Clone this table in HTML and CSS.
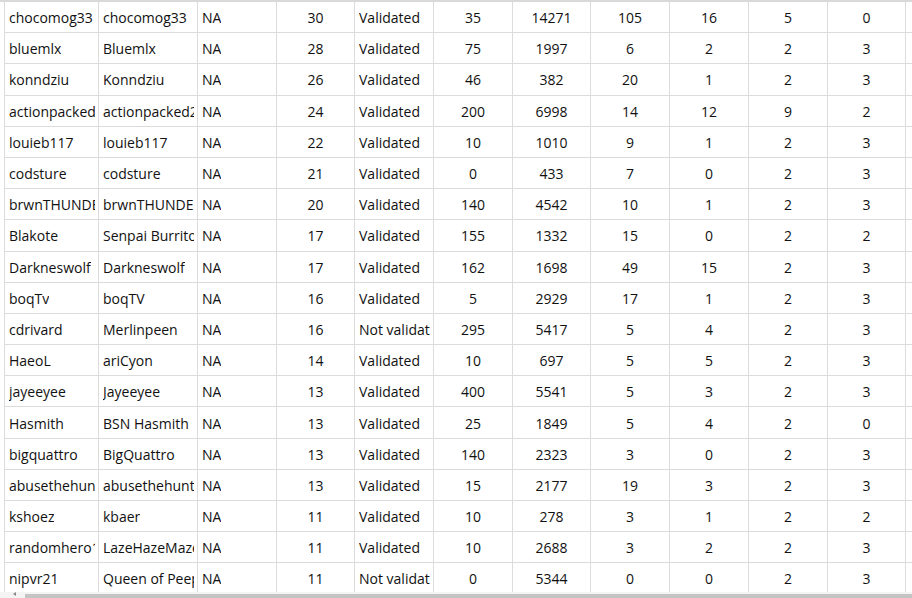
FILE: index.html
```html
<!DOCTYPE html>
<html>
<head>
<meta charset="utf-8">
<link rel="stylesheet" href="styles.css">
</head>
<body>
<div class="view">
  <div class="grid">
    <div class="c l"><span>chocomog33</span></div><div class="c l"><span>chocomog33</span></div><div class="c l"><span>NA</span></div><div class="c m">30</div><div class="c l"><span>Validated</span></div><div class="c m">35</div><div class="c m">14271</div><div class="c m">105</div><div class="c m">16</div><div class="c m">5</div><div class="c m">0</div><div class="c e"></div>
    <div class="c l"><span>bluemlx</span></div><div class="c l"><span>Bluemlx</span></div><div class="c l"><span>NA</span></div><div class="c m">28</div><div class="c l"><span>Validated</span></div><div class="c m">75</div><div class="c m">1997</div><div class="c m">6</div><div class="c m">2</div><div class="c m">2</div><div class="c m">3</div><div class="c e"></div>
    <div class="c l"><span>konndziu</span></div><div class="c l"><span>Konndziu</span></div><div class="c l"><span>NA</span></div><div class="c m">26</div><div class="c l"><span>Validated</span></div><div class="c m">46</div><div class="c m">382</div><div class="c m">20</div><div class="c m">1</div><div class="c m">2</div><div class="c m">3</div><div class="c e"></div>
    <div class="c l"><span>actionpacked</span></div><div class="c l"><span>actionpacked2k</span></div><div class="c l"><span>NA</span></div><div class="c m">24</div><div class="c l"><span>Validated</span></div><div class="c m">200</div><div class="c m">6998</div><div class="c m">14</div><div class="c m">12</div><div class="c m">9</div><div class="c m">2</div><div class="c e"></div>
    <div class="c l"><span>louieb117</span></div><div class="c l"><span>louieb117</span></div><div class="c l"><span>NA</span></div><div class="c m">22</div><div class="c l"><span>Validated</span></div><div class="c m">10</div><div class="c m">1010</div><div class="c m">9</div><div class="c m">1</div><div class="c m">2</div><div class="c m">3</div><div class="c e"></div>
    <div class="c l"><span>codsture</span></div><div class="c l"><span>codsture</span></div><div class="c l"><span>NA</span></div><div class="c m">21</div><div class="c l"><span>Validated</span></div><div class="c m">0</div><div class="c m">433</div><div class="c m">7</div><div class="c m">0</div><div class="c m">2</div><div class="c m">3</div><div class="c e"></div>
    <div class="c l"><span>brwnTHUNDER</span></div><div class="c l"><span>brwnTHUNDER</span></div><div class="c l"><span>NA</span></div><div class="c m">20</div><div class="c l"><span>Validated</span></div><div class="c m">140</div><div class="c m">4542</div><div class="c m">10</div><div class="c m">1</div><div class="c m">2</div><div class="c m">3</div><div class="c e"></div>
    <div class="c l"><span>Blakote</span></div><div class="c l"><span>Senpai Burrito</span></div><div class="c l"><span>NA</span></div><div class="c m">17</div><div class="c l"><span>Validated</span></div><div class="c m">155</div><div class="c m">1332</div><div class="c m">15</div><div class="c m">0</div><div class="c m">2</div><div class="c m">2</div><div class="c e"></div>
    <div class="c l"><span>Darkneswolf</span></div><div class="c l"><span>Darkneswolf</span></div><div class="c l"><span>NA</span></div><div class="c m">17</div><div class="c l"><span>Validated</span></div><div class="c m">162</div><div class="c m">1698</div><div class="c m">49</div><div class="c m">15</div><div class="c m">2</div><div class="c m">3</div><div class="c e"></div>
    <div class="c l"><span>boqTv</span></div><div class="c l"><span>boqTV</span></div><div class="c l"><span>NA</span></div><div class="c m">16</div><div class="c l"><span>Validated</span></div><div class="c m">5</div><div class="c m">2929</div><div class="c m">17</div><div class="c m">1</div><div class="c m">2</div><div class="c m">3</div><div class="c e"></div>
    <div class="c l"><span>cdrivard</span></div><div class="c l"><span>Merlinpeen</span></div><div class="c l"><span>NA</span></div><div class="c m">16</div><div class="c l"><span>Not validated</span></div><div class="c m">295</div><div class="c m">5417</div><div class="c m">5</div><div class="c m">4</div><div class="c m">2</div><div class="c m">3</div><div class="c e"></div>
    <div class="c l"><span>HaeoL</span></div><div class="c l"><span>ariCyon</span></div><div class="c l"><span>NA</span></div><div class="c m">14</div><div class="c l"><span>Validated</span></div><div class="c m">10</div><div class="c m">697</div><div class="c m">5</div><div class="c m">5</div><div class="c m">2</div><div class="c m">3</div><div class="c e"></div>
    <div class="c l"><span>jayeeyee</span></div><div class="c l"><span>Jayeeyee</span></div><div class="c l"><span>NA</span></div><div class="c m">13</div><div class="c l"><span>Validated</span></div><div class="c m">400</div><div class="c m">5541</div><div class="c m">5</div><div class="c m">3</div><div class="c m">2</div><div class="c m">3</div><div class="c e"></div>
    <div class="c l"><span>Hasmith</span></div><div class="c l"><span>BSN Hasmith</span></div><div class="c l"><span>NA</span></div><div class="c m">13</div><div class="c l"><span>Validated</span></div><div class="c m">25</div><div class="c m">1849</div><div class="c m">5</div><div class="c m">4</div><div class="c m">2</div><div class="c m">0</div><div class="c e"></div>
    <div class="c l"><span>bigquattro</span></div><div class="c l"><span>BigQuattro</span></div><div class="c l"><span>NA</span></div><div class="c m">13</div><div class="c l"><span>Validated</span></div><div class="c m">140</div><div class="c m">2323</div><div class="c m">3</div><div class="c m">0</div><div class="c m">2</div><div class="c m">3</div><div class="c e"></div>
    <div class="c l"><span>abusethehunt</span></div><div class="c l"><span>abusethehunt</span></div><div class="c l"><span>NA</span></div><div class="c m">13</div><div class="c l"><span>Validated</span></div><div class="c m">15</div><div class="c m">2177</div><div class="c m">19</div><div class="c m">3</div><div class="c m">2</div><div class="c m">3</div><div class="c e"></div>
    <div class="c l"><span>kshoez</span></div><div class="c l"><span>kbaer</span></div><div class="c l"><span>NA</span></div><div class="c m">11</div><div class="c l"><span>Validated</span></div><div class="c m">10</div><div class="c m">278</div><div class="c m">3</div><div class="c m">1</div><div class="c m">2</div><div class="c m">2</div><div class="c e"></div>
    <div class="c l"><span>randomhero1</span></div><div class="c l"><span>LazeHazeMaze</span></div><div class="c l"><span>NA</span></div><div class="c m">11</div><div class="c l"><span>Validated</span></div><div class="c m">10</div><div class="c m">2688</div><div class="c m">3</div><div class="c m">2</div><div class="c m">2</div><div class="c m">3</div><div class="c e"></div>
    <div class="c l"><span>nipvr21</span></div><div class="c l"><span>Queen of Peeps</span></div><div class="c l"><span>NA</span></div><div class="c m">11</div><div class="c l"><span>Not validated</span></div><div class="c m">0</div><div class="c m">5344</div><div class="c m">0</div><div class="c m">0</div><div class="c m">2</div><div class="c m">3</div><div class="c e"></div>
  </div>
  <div class="hscroll">
    <div class="arrow"></div>
    <div class="thumb"></div>
  </div>
</div>
</body>
</html>
```
FILE: styles.css
```css
html, body {
  margin: 0;
  padding: 0;
  background: #ffffff;
}
.view {
  position: relative;
  width: 912px;
  height: 598px;
  overflow: hidden;
  border-top: 2px solid #d9d9d9;
  box-sizing: border-box;
  font-family: "Open Sans", "Noto Sans", sans-serif;
  font-size: 14px;
  color: #111111;
}
.grid {
  display: grid;
  grid-template-columns: 94px 99px 79px 78px 79px 79px 78px 79px 79px 79px 78px 40px;
  grid-auto-rows: 31.2px;
  margin-left: 4px;
  border-left: 1px solid #dcdcdc;
}
.c {
  border-right: 1px solid #dcdcdc;
  border-bottom: 1px solid #dcdcdc;
  display: flex;
  align-items: center;
  white-space: nowrap;
  overflow: hidden;
  box-sizing: border-box;
  padding-top: 1px;
}
.l {
  padding-left: 4px;
  padding-right: 3px;
}
.l span {
  overflow: hidden;
  min-width: 0;
}
.m {
  justify-content: center;
}
.e {
  border-right: none;
}
.hscroll {
  position: absolute;
  left: 0;
  right: 0;
  bottom: 0;
  height: 6px;
  background: #f4f4f4;
}
.arrow {
  position: absolute;
  left: 13px;
  top: 0;
  width: 0;
  height: 0;
  border-top: 2px solid transparent;
  border-bottom: 2px solid transparent;
  border-right: 3px solid #888888;
}
.thumb {
  position: absolute;
  left: 25px;
  right: 0;
  top: 2px;
  bottom: 0;
  background: #c4c4c4;
}
```
